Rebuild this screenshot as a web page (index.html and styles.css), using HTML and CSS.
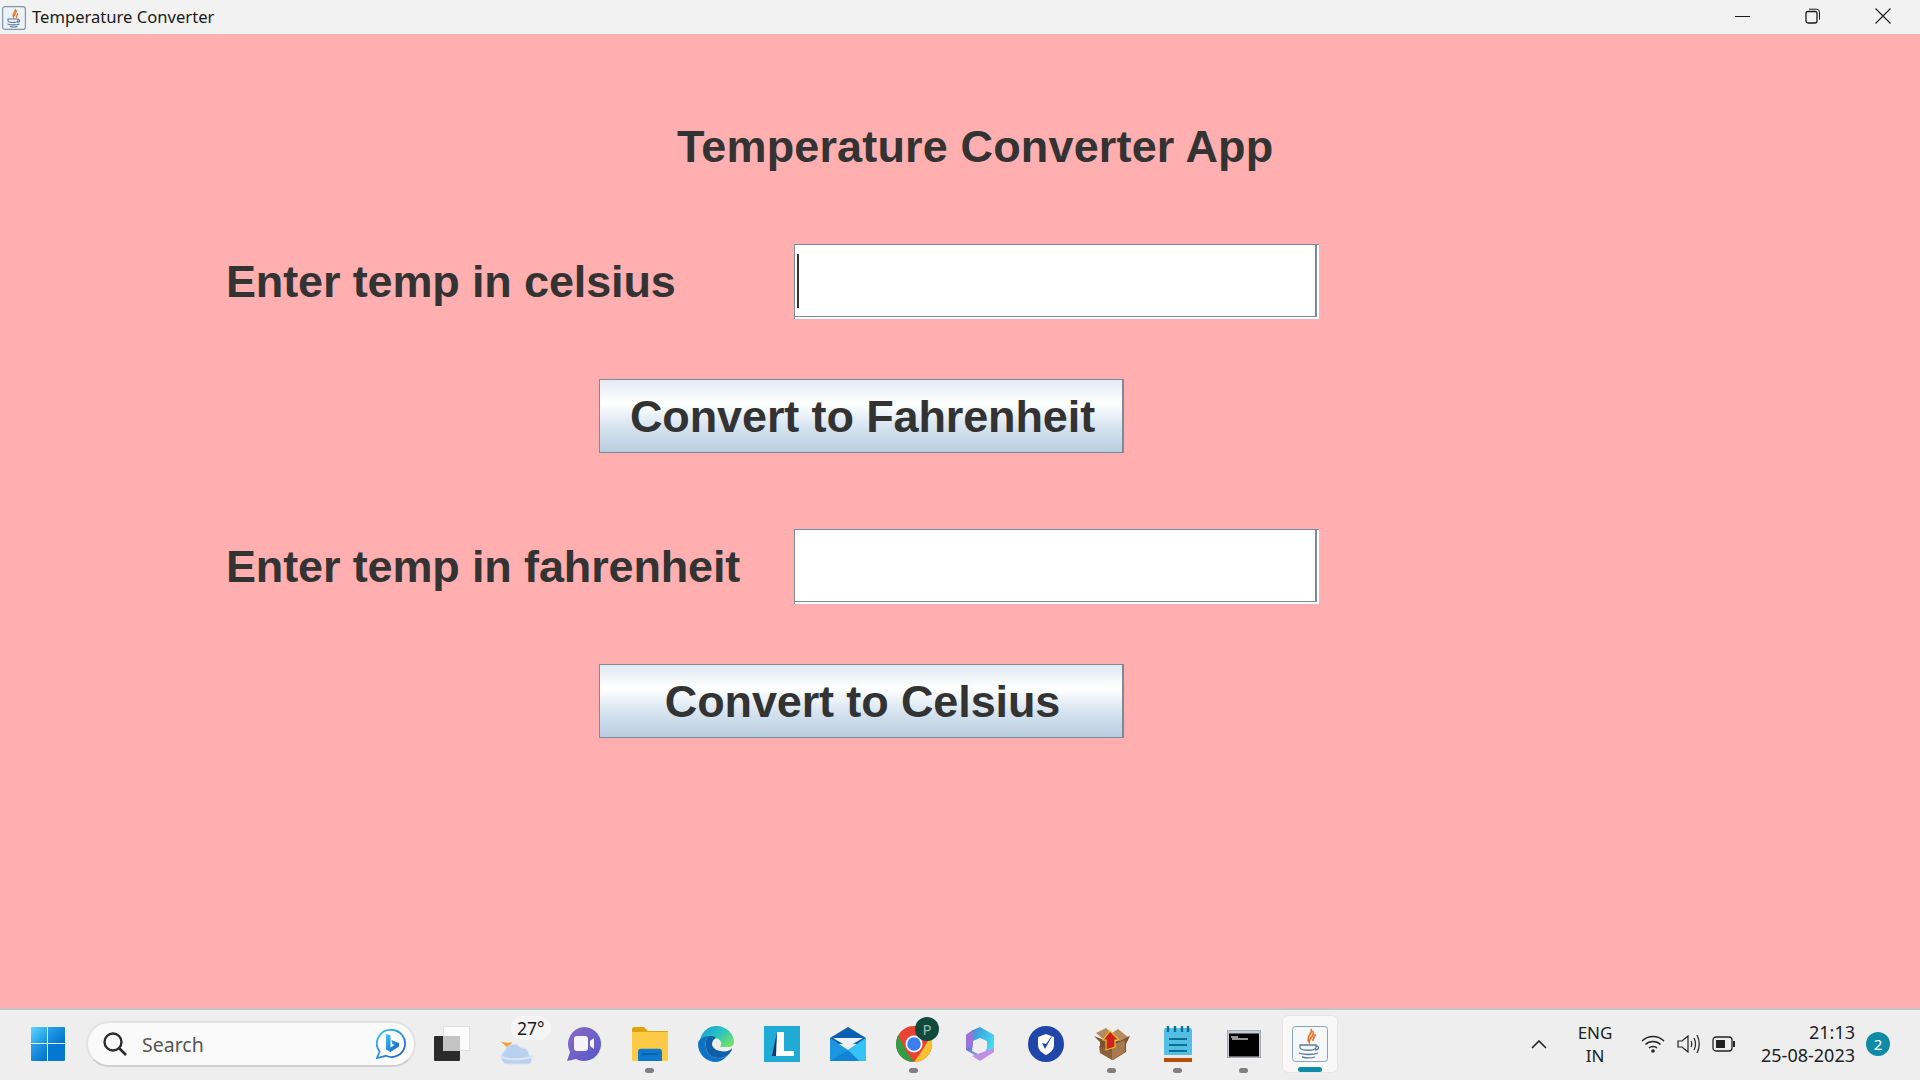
FILE: index.html
```html
<!DOCTYPE html>
<html lang="en">
<head>
<meta charset="utf-8">
<title>Temperature Converter</title>
<link rel="stylesheet" href="styles.css">
</head>
<body>
<div class="screen">
  <header class="titlebar">
    <svg class="app-icon" width="24" height="24" viewBox="0 0 24 24"><rect x=".6" y=".6" width="22.800" height="22.800" rx="2.500" fill="#eef2f6" stroke="#7f97ad" stroke-width="1.200"/><path d="M13 3c2 2.500-3.500 4-1.500 8 .2-2.500 4-3.500 2.500-7M15.500 7c1 2-2 2.500-1 5" fill="none" stroke="#e8772e" stroke-width="1.300"/><path d="M6 13h10v2c-1 2-9 2-10 0zM16 13.500c2.500 0 2 3-.5 3M5.500 18c3 1.200 9 1.200 12 0M8 20.500c2.500.6 5.500.6 7.500 0" fill="none" stroke="#5a7d9c" stroke-width="1.100"/></svg>
    <span class="window-title">Temperature Converter</span>
    <div class="window-controls">
      <svg width="16" height="16" viewBox="0 0 16 16"><path d="M0 8.500h15" stroke="#1a1a1a" fill="none"/></svg>
      <svg width="16" height="16" viewBox="0 0 16 16"><rect x="1" y="3.500" width="11" height="11.500" rx="2" fill="none" stroke="#1a1a1a" stroke-width="1.300"/><path d="M4 1.200h7.500a3 3 0 0 1 3 3v7.500" fill="none" stroke="#1a1a1a"/></svg>
      <svg width="16" height="16" viewBox="0 0 16 16"><path d="M.5 .5l15 15M15.500 .5L.5 15.500" stroke="#1a1a1a" stroke-width="1.100" fill="none"/></svg>
    </div>
  </header>

  <main class="app">
    <h1 class="app-title">Temperature Converter App</h1>
    <div class="field-row">
      <label class="field-label">Enter temp in celsius</label>
      <div class="field"><div class="field-inner"><span class="caret"></span></div></div>
    </div>
    <button class="convert">Convert to Fahrenheit</button>
    <div class="field-row second">
      <label class="field-label">Enter temp in fahrenheit</label>
      <div class="field"><div class="field-inner"></div></div>
    </div>
    <button class="convert">Convert to Celsius</button>
  </main>

  <footer class="taskbar">
    <div class="task start">
      <svg width="36" height="36" viewBox="0 0 36 36"><defs><linearGradient id="w1" x1="0" y1="0" x2="1" y2="1"><stop offset="0" stop-color="#5fd6fb"/><stop offset="1" stop-color="#0f8fe0"/></linearGradient><linearGradient id="w2" x1="0" y1="0" x2="1" y2="1"><stop offset="0" stop-color="#2aa3ea"/><stop offset="1" stop-color="#0071cc"/></linearGradient></defs><path d="M1 2a1 1 0 0 1 1-1h15v16H1z" fill="url(#w1)"/><path d="M18 1h16a1 1 0 0 1 1 1v15H18z" fill="url(#w2)"/><path d="M1 18h16v17H2a1 1 0 0 1-1-1z" fill="url(#w2)"/><path d="M18 18h17v16a1 1 0 0 1-1 1H18z" fill="#0478d0"/></svg>
    </div>
    <div class="search">
      <svg width="24" height="24" viewBox="0 0 24 24"><circle cx="10" cy="10" r="8.500" fill="none" stroke="#2b2b2b" stroke-width="2.400"/><path d="M16 16l7 7" stroke="#2b2b2b" stroke-width="2.600" fill="none"/></svg>
      <span class="search-text">Search</span>
      <svg class="bing" width="30" height="30" viewBox="0 0 30 30"><defs><linearGradient id="bg" x1="0" y1="0" x2="1" y2="1"><stop offset="0" stop-color="#35c8f2"/><stop offset="1" stop-color="#1b58c8"/></linearGradient></defs><path d="M15.500 1a13.500 13.500 0 1 1-5.500 25.800L1 29l2.600-6.500A13.500 13.500 0 0 1 15.500 1z" fill="#fff" stroke="url(#bg)" stroke-width="1.800"/><path d="M10 5l4.500 1.500v12l4-2.400-2.200-1-1-4 7.700 2.800v3.600L14.500 23 10 20.500z" fill="url(#bg)"/></svg>
    </div>
    <div class="task">
      <svg width="36" height="36" viewBox="0 0 36 36"><rect x="9.500" y="0.500" width="26" height="24" fill="#fbfbfb" stroke="#e0e0e0"/><path d="M0 11a1 1 0 0 1 1-1h25v24a1 1 0 0 1-1 1H1a1 1 0 0 1-1-1z" fill="#2b2b2b"/><rect x="9" y="10" width="17" height="15" fill="#c4c4c4"/></svg>
    </div>
    <div class="task weather">
      <svg width="36" height="26" viewBox="0 0 36 26"><path d="M0 2c4 2 8 2 12 1l-3 7z" fill="#f2a032"/><path d="M7 25a7 7 0 0 1-2-13 9 9 0 0 1 16-3 7 7 0 0 1 8 7 5 5 0 0 1 0 9z" fill="#b9d0ee" stroke="#d8e4f4"/><path d="M2 18c8 3 20 3 32-1" stroke="#dbe6f6" stroke-width="2" fill="none"/></svg>
      <span class="temp">27°</span>
    </div>
    <div class="task">
      <svg width="36" height="36" viewBox="0 0 36 36"><defs><linearGradient id="mt" x1="0" y1="0" x2="1" y2="1"><stop offset="0" stop-color="#8a6bc5"/><stop offset="1" stop-color="#5558c9"/></linearGradient></defs><path d="M18 1a17 17 0 1 1-8 32l-9 2 3-9A17 17 0 0 1 18 1z" fill="url(#mt)"/><rect x="8" y="10" width="14" height="15" rx="3" fill="#f6f3fb"/><path d="M24 15l4-3v11l-4-3z" fill="#f6f3fb"/></svg>
    </div>
    <div class="task running">
      <svg width="36" height="34" viewBox="0 0 36 34"><path d="M0 2a2 2 0 0 1 2-2h10l4 4h20v8H0z" fill="#dba40b"/><path d="M0 5h36v28a1 1 0 0 1-1 1H1a1 1 0 0 1-1-1z" fill="#fdcb45"/><path d="M6 34V25a3 3 0 0 1 3-3h18a3 3 0 0 1 3 3v9z" fill="#0e78cf" transform="translate(0 -1) scale(1 1.030)"/><path d="M10 27h16" stroke="#075a9e" stroke-width="1.500"/></svg>
    </div>
    <div class="task">
      <svg width="36" height="36" viewBox="0 0 36 36"><defs><linearGradient id="e1" x1="0" y1="0" x2="1" y2=".7"><stop offset="0" stop-color="#0f9ad8"/><stop offset=".55" stop-color="#2cc4c0"/><stop offset="1" stop-color="#6ee06a"/></linearGradient></defs><path d="M2 14C4 5 11 0 18 0c11 0 18 8 18 16 0 4-3 5-6 5h-8c2-2 2-6-2-8-6-3-14-1-18 1z" fill="url(#e1)"/><path d="M0 18c0-4 4-8 12-8-6 2-5 12-2 17 4 6 15 7 21 1-4 5-9 8-13 8C8 36 0 28 0 18z" fill="#0c72c6"/><path d="M12 10c-6 2-5 12-2 17 4 6 15 7 21 1 2-2 3-4 3-6-2 3-6 4-12 3-5-1-8-4-8-7 0-3 2-5 4-6-2-2-4-2-6-2z" fill="#0f5ea8"/></svg>
    </div>
    <div class="task">
      <svg width="36" height="36" viewBox="0 0 36 36"><rect width="36" height="36" fill="#20aad6"/><path d="M13 6h7v19h10v5H11z" fill="#fff"/><path d="M13 6l-1 24H8z" fill="#16336e"/></svg>
    </div>
    <div class="task">
      <svg width="36" height="34" viewBox="0 0 36 34"><path d="M0 11L18 0l18 11v6H0z" fill="#0b5fb0"/><path d="M3 11h30L18 20z" fill="#eef2f6"/><path d="M0 11l18 12 18-12v22a1 1 0 0 1-1 1H1a1 1 0 0 1-1-1z" fill="#1b97e0"/><path d="M18 23l18-12v22a1 1 0 0 1-1 1h-6z" fill="#35c2f4"/><path d="M0 34l18-11 11 11z" fill="#1184d6"/></svg>
    </div>
    <div class="task running chrome">
      <svg width="36" height="36" viewBox="0 0 36 36"><circle cx="18" cy="18" r="18" fill="#ea4335"/><path d="M2 9l8 16 8 11C8 36 0 28 0 18c0-3 1-6 2-9z" fill="#2f9e44"/><path d="M18 36l8-11 9-15c1 2 1 5 1 8 0 10-8 18-18 18z" fill="#fbc02d"/><circle cx="18" cy="18" r="8.500" fill="#fff"/><circle cx="18" cy="18" r="6.800" fill="#3a7ff0"/></svg>
      <span class="profile">P</span>
    </div>
    <div class="task">
      <svg width="32" height="34" viewBox="0 0 32 34"><defs><linearGradient id="m1" x1="0" y1="0" x2="1" y2=".6"><stop offset="0" stop-color="#3f8fd4"/><stop offset="1" stop-color="#45dcf2"/></linearGradient><linearGradient id="m2" x1="0" y1="0" x2="1" y2="1"><stop offset="0" stop-color="#1a6fc0"/><stop offset="1" stop-color="#c69ae8"/></linearGradient></defs><path d="M9 3l7-3 14 8v14l-8 4v-9l-6-4-7 3z" fill="url(#m1)"/><path d="M2 8l7-5v14l-1 7 8 4 8-3-8 6-14-8z" fill="url(#m2)"/><path d="M2 8l7-5 1 8-2 8-6 3z" fill="#9a72da"/><path d="M16 26l14-5v4l-14 9-8-5z" fill="#bf90e6"/><path d="M16 11l7 3v6c0 3-3 5-7 6-4-1-7-3-7-6v-6z" fill="#eeeeee"/></svg>
    </div>
    <div class="task">
      <svg width="36" height="36" viewBox="0 0 36 36"><circle cx="18" cy="18" r="18" fill="#1f46a8"/><path d="M18 8l8 3v8c0 5-4 8-8 10-4-2-8-5-8-10v-8z" fill="#fff"/><path d="M14 17l3 6 9-16-8 11z" fill="#1f46a8"/></svg>
    </div>
    <div class="task running">
      <svg width="36" height="34" viewBox="0 0 36 34"><path d="M0 9l10 4 8 3 9-4 9-3-4 8v8l-13 8-13-8v-10z" fill="#7a5232"/><path d="M2 6l10-5 6 5-8 7z" fill="#b58a60"/><path d="M34 10L24 2l-6 4 8 8z" fill="#b58a60"/><path d="M18 18l13-5v12l-13 8z" fill="#a9794e"/><path d="M5 19l13 5v9L6 26z" fill="#8a5f3a"/><path d="M16 4l9 9h-4v7l-9 3v-10H9z" fill="#cf1f1f" stroke="#e4c21a" stroke-width="1.200"/></svg>
    </div>
    <div class="task running">
      <svg width="28" height="36" viewBox="0 0 28 36"><rect x="0" y="2" width="28" height="28" rx="2" fill="#52bfe3"/><path d="M0 32h28v4H0z" fill="#b4500a"/><path d="M0 29h28v3H0z" fill="#e8e8e8"/><path d="M4 0v6M11 0v6M18 0v6M24 0v6" stroke="#0a6f96" stroke-width="2.400"/><path d="M5 13h18M5 19h18M5 25h18" stroke="#0a6f96" stroke-width="2"/></svg>
    </div>
    <div class="task running">
      <svg width="34" height="28" viewBox="0 0 34 28"><rect x=".5" y=".5" width="33" height="27" fill="#c8ccd0" stroke="#a5a9ad"/><rect x="2" y="3.500" width="30" height="23" fill="#000"/><path d="M4 7h7M5 9h16" stroke="#c4c4c4" stroke-width="1.300"/></svg>
    </div>
    <div class="task active">
      <svg width="36" height="36" viewBox="0 0 36 36"><rect x=".5" y=".5" width="35" height="35" rx="3" fill="#f5f7f9" stroke="#8aa2b8"/><path d="M19 3c3 4-6 7-2 13 0-4 6-6 4-11M23 8c1 3-3 4-2 7" fill="none" stroke="#e8772e" stroke-width="1.800"/><path d="M8 19h16v3c-2 3-14 3-16 0zM24 20c4 0 3 4-1 4M7 27c5 2 14 2 19 0M10 31c4 1 10 1 13 0" fill="none" stroke="#5a7d9c" stroke-width="1.300"/></svg>
    </div>

    <div class="tray">
      <svg class="chevron" width="16" height="9" viewBox="0 0 16 9"><path d="M1 8l7-7 7 7" fill="none" stroke="#222" stroke-width="1.600"/></svg>
      <div class="lang"><span>ENG</span><span>IN</span></div>
      <div class="status">
        <svg width="24" height="20" viewBox="0 0 24 20"><path d="M1 7c6-6 16-6 22 0M4.500 10.500c4-4 11-4 15 0M8 14c2-2 6-2 8 0" fill="none" stroke="#222" stroke-width="1.300"/><circle cx="12" cy="17" r="1.800" fill="#222"/></svg>
        <svg width="24" height="20" viewBox="0 0 24 20"><path d="M1 7h4l6-5v16l-6-5H1z" fill="none" stroke="#222" stroke-width="1.200"/><path d="M14 7c1 2 1 4 0 6M17 4c2 4 2 8 0 12M20 1c3 6 3 12 0 18" fill="none" stroke="#222" stroke-width="1.200"/></svg>
        <svg width="24" height="16" viewBox="0 0 24 16"><rect x="1" y="1" width="19" height="14" rx="3" fill="none" stroke="#222" stroke-width="1.300"/><rect x="4" y="4" width="9" height="8" fill="#222"/><path d="M21 5h2v6h-2z" fill="#222"/></svg>
      </div>
      <div class="clock"><span>21:13</span><span>25-08-2023</span></div>
      <span class="notify">2</span>
    </div>
  </footer>
</div>
</body>
</html>
```

FILE: styles.css
```css
* { box-sizing: border-box; }
html, body { margin: 0; padding: 0; }
body { width: 1920px; height: 1080px; overflow: hidden; font-family: "Noto Sans", sans-serif; }
.screen { width: 1920px; height: 1080px; display: flex; flex-direction: column; background: #ffafaf; }

.titlebar { height: 34px; flex: none; display: flex; align-items: center; background: #f2f2f2; color: #1a1a1a; padding-left: 2px; }
.app-icon { flex: none; margin-top: 2px; }
.window-title { margin-left: 6px; font-size: 16.600px; line-height: 34px; }
.window-controls { margin-left: auto; display: flex; gap: 54px; padding-right: 29px; margin-bottom: 2px; }

.app { flex: 1; display: flex; flex-direction: column; align-items: flex-start; padding-left: 226px; font-family: "Liberation Sans", sans-serif; color: #333333; }
.app-title { margin: 83px 0 0 451px; font-size: 45px; letter-spacing: 0.15px; line-height: 60px; font-weight: 700; white-space: nowrap; }
.field-row { display: flex; align-items: center; margin-top: 67px; height: 75px; }
.field-row.second { margin-top: 76px; }
.field-label { width: 568px; font-size: 45px; letter-spacing: -0.14px; font-weight: 700; white-space: nowrap; }
.field { width: 525px; height: 75px; display: flex; background: #ffffff; border-top: 1px solid #7a8a99; border-left: 1px solid #7a8a99; }
.field-inner { flex: 1; margin-bottom: 2px; margin-right: 2px; border-right: 2px solid #7a8a99; border-bottom: 1px solid #7a8a99; display: flex; align-items: center; padding-left: 2px; }
.caret { width: 2px; height: 54px; background: #333333; }
.convert { margin: 60px 0 0 373px; width: 525px; height: 74px; padding: 2px 0 0 3px; border: 1px solid #7a8a99; border-right-width: 2px; font: 700 45px "Liberation Sans", sans-serif; letter-spacing: -0.12px; color: #333333; background: linear-gradient(#e3eaf2 0, #ffffff 33%, #d6e3f0 66%, #b8cde0 100%); }

.taskbar { height: 72px; flex: none; display: flex; align-items: center; background: #eeeeee; border-top: 2px solid #c4c4c4; padding: 0 0 2px 15px; position: relative; }
.task { width: 66px; height: 68px; flex: none; display: flex; align-items: center; justify-content: center; position: relative; }
.search { width: 330px; height: 46px; flex: none; margin: 0 0 0 5px; display: flex; align-items: center; padding: 0 8px 0 15px; background: #fafafa; border: 2px solid #e2e2e2; border-bottom-color: #cfcfcf; border-radius: 23px; }
.search-text { margin-left: 15px; font-size: 19.500px; color: #555555; }
.bing { margin-left: auto; }
.search + .task { margin-left: 3px; }
.weather svg { margin-top: 16px; margin-right: 0; }
.temp { position: absolute; left: 26px; top: 6px; padding: 0 6px; font-size: 17.500px; line-height: 24px; color: #1a1a1a; background: #f5f5f5; border-radius: 12px; }
.running::after { content: ""; position: absolute; bottom: 5px; left: 28px; width: 9px; height: 5px; border-radius: 3px; background: #7f7f7f; }
.profile { position: absolute; left: 34px; top: 7px; width: 24px; height: 24px; border-radius: 50%; background: #0f4a3c; color: #9fbdb4; font-size: 15px; line-height: 24px; text-align: center; }
.active { width: 56px; height: 58px; margin: 0 5px; background: #f8f8f8; border: 1px solid #e6e6e6; border-radius: 6px; }
.active::after { content: ""; position: absolute; bottom: 0; left: 15px; width: 24px; height: 5px; border-radius: 3px; background: #0f8ba5; }

.tray { margin-left: auto; display: flex; align-items: center; color: #222222; padding-right: 30px; }
.chevron { margin-right: 28px; }
.lang { display: flex; flex-direction: column; align-items: center; width: 40px; margin-right: 26px; font-size: 17px; line-height: 23px; }
.status { display: flex; align-items: center; gap: 11.500px; margin-right: 25px; }
.clock { display: flex; flex-direction: column; align-items: flex-end; font-size: 18px; line-height: 23px; margin-right: 11px; }
.notify { width: 24px; height: 24px; border-radius: 50%; background: #0f8ba5; color: #ffffff; font-size: 15px; line-height: 24px; text-align: center; }
```
